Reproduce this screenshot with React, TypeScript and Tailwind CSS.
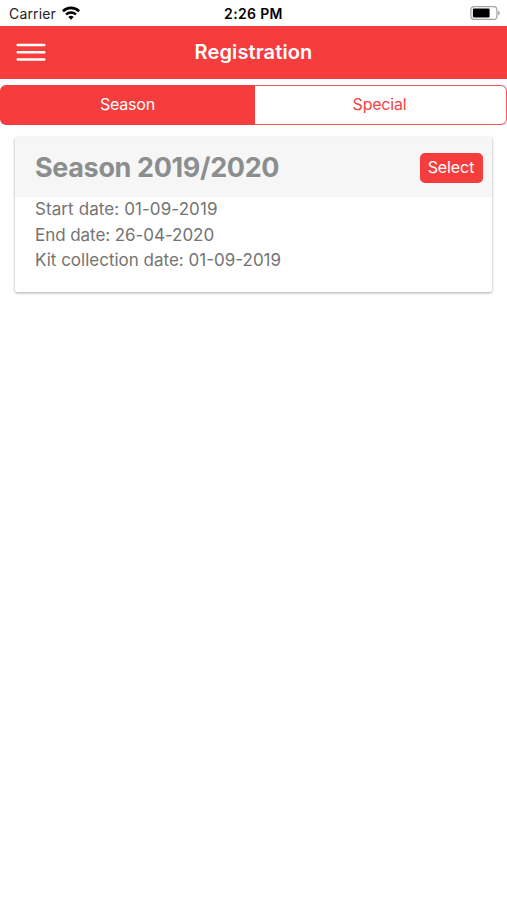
const details = [
  { text: "Start date: 01-09-2019", tracking: "tracking-[0.09px]" },
  { text: "End date: 26-04-2020", tracking: "tracking-[-0.06px]" },
  { text: "Kit collection date: 01-09-2019", tracking: "tracking-normal" },
];

function WifiIcon() {
  return (
    <svg className="h-[14px] w-[18px]" viewBox="0 0 18 14" fill="none" stroke="#000" strokeWidth="2.6">
      <path d="M0.9 5.2a11.6 11.6 0 0 1 16.2 0" />
      <path d="M4 8.5a7.2 7.2 0 0 1 10 0" strokeWidth="2.3" />
      <path d="M6.3 11a3.9 3.9 0 0 1 5.4 0L9 13.8Z" fill="#000" stroke="none" />
    </svg>
  );
}

function BatteryIcon() {
  return (
    <svg className="h-[14px] w-[31px]" viewBox="0 0 31 14">
      <rect x="0.9" y="0.6" width="26" height="12.8" rx="3.2" fill="#fff" stroke="#a3a3a3" strokeWidth="1.2" />
      <rect x="2.9" y="2.4" width="16.7" height="9.2" rx="1.3" fill="#000" />
      <path d="M28.1 4.7c2.4 1 2.4 3.6 0 4.6Z" fill="#a3a3a3" />
    </svg>
  );
}

function MenuIcon() {
  return (
    <svg className="h-[18px] w-[30px]" viewBox="0 0 30 18" stroke="#fff" strokeWidth="2.5" strokeLinecap="round">
      <path d="M1.7 2h26.6M1.7 9.2h26.6M1.7 16.4h26.6" />
    </svg>
  );
}

export default function App() {
  return (
    <div className="flex h-[900px] w-[507px] flex-col overflow-hidden bg-white font-['Inter','Liberation_Sans',sans-serif]">
      <div className="grid h-[25.5px] shrink-0 grid-cols-3 pt-[6px] text-[14px] leading-[16px] text-[#222]">
        <div className="flex gap-[6px] pl-[9px]">
          <span className="tracking-[0.15px]">Carrier</span>
          <WifiIcon />
        </div>
        <span className="text-center font-semibold tracking-[0.35px] text-black">2:26 PM</span>
        <div className="flex justify-end pr-[6px]">
          <BatteryIcon />
        </div>
      </div>

      <header className="grid h-[53.5px] shrink-0 grid-cols-[1fr_auto_1fr] items-center bg-[#f63d3d] text-white">
        <button className="ml-4 w-[30px]" aria-label="Menu">
          <MenuIcon />
        </button>
        <h1 className="text-[20px] font-semibold tracking-[0.12px]">Registration</h1>
      </header>

      <div className="mt-[6px] flex h-[39.5px] shrink-0 text-[16px] tracking-[-0.2px]">
        <button className="flex w-[255px] items-center justify-center rounded-l-[6px] bg-[#f63d3d] pb-px text-white">Season</button>
        <button className="flex flex-1 items-center justify-center rounded-r-[6px] border-[1.5px] border-l-0 border-[#f65656] bg-white pr-[2px] pb-px text-[#f04444]">Special</button>
      </div>

      <section className="mx-[15px] mt-[12px] h-[155px] shrink-0 rounded-[2px] bg-white shadow-[0_1px_3px_rgba(0,0,0,0.35)]">
        <div className="flex h-[60px] items-center justify-between bg-[#f6f6f6] pr-[9.5px] pl-5">
          <h2 className="pt-[4px] text-[27px] font-bold tracking-[-0.36px] text-[#8b8e8f]">Season 2019/2020</h2>
          <button className="mt-[2px] h-[30px] w-[63px] rounded-[5px] bg-[#f63d3d] pb-px text-[16px] tracking-[-0.1px] text-white">Select</button>
        </div>
        <div className="pt-[0.4px] pl-5 text-[17px] leading-[25.8px] text-[#737373]">
          {details.map(({ text, tracking }) => (
            <p key={text} className={tracking}>{text}</p>
          ))}
        </div>
      </section>
    </div>
  );
}
